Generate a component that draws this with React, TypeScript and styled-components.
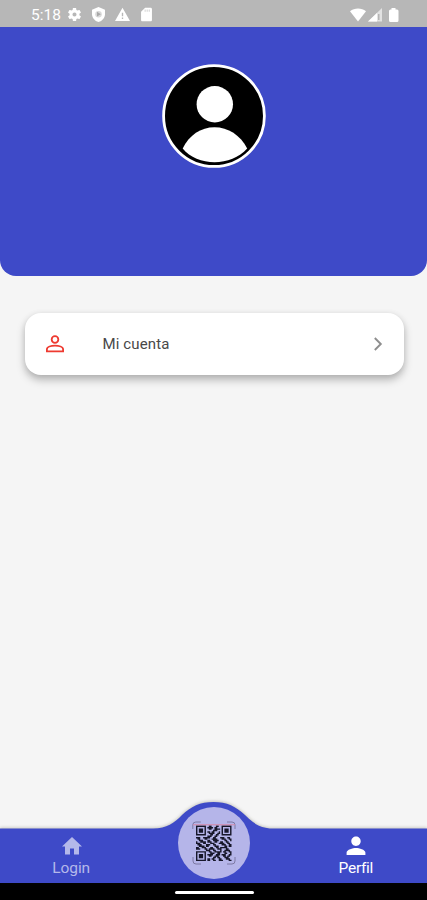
import React from "react";
import styled, { createGlobalStyle } from "styled-components";

const GlobalStyle = createGlobalStyle`
  * { box-sizing: border-box; }
  body { margin: 0; background: #f5f5f5; font-family: Roboto, "Liberation Sans", sans-serif; }
`;

const Screen = styled.div`
  width: 427px;
  height: 900px;
  display: flex;
  flex-direction: column;
  overflow: hidden;
  background: #f5f5f5;
`;

const StatusBar = styled.header`
  height: 27px;
  flex: none;
  display: flex;
  align-items: center;
  justify-content: space-between;
  padding: 2px 25px 0 31px;
  background: #b7b7b7;
  color: #fff;
`;

const StatusGroup = styled.div<{ $gap: number }>`
  display: flex;
  align-items: center;
  gap: ${(p) => p.$gap}px;
`;

const Clock = styled.span`
  font-size: 15.5px;
  line-height: 18px;
  width: 29px;
  margin-right: -2px;
  white-space: nowrap;
`;

const Icon = styled.svg<{ $w: number; $h?: number }>`
  display: block;
  flex: none;
  width: ${(p) => p.$w}px;
  height: ${(p) => p.$h ?? p.$w}px;
  fill: currentColor;
`;

const Banner = styled.section`
  height: 248.5px;
  flex: none;
  display: flex;
  justify-content: center;
  align-items: flex-start;
  padding: 36.5px 0 0 1px;
  border-radius: 0 0 16px 16px;
  background: #3e4ac8;
`;

const Content = styled.main`
  flex: 1;
  padding: 37.5px 23.5px 0 24.5px;
`;

const Card = styled.button`
  width: 100%;
  height: 62px;
  display: flex;
  align-items: center;
  padding: 0 18px 0 20px;
  border: 0;
  border-radius: 16px;
  background: #fff;
  box-shadow: 0 5px 8px rgba(0, 0, 0, 0.25), 0 1px 6px rgba(0, 0, 0, 0.08);
  color: #484848;
  font: 400 15px/20px Roboto, "Liberation Sans", sans-serif;
`;

const CardLabel = styled.span`
  flex: 1;
  padding-left: 38px;
  text-align: left;
  letter-spacing: 0.12px;
`;

const Red = styled.span`
  color: #ee3a30;
`;

const Grey = styled.span`
  color: #8e8e8e;
`;

const NavBar = styled.nav`
  position: relative;
  height: 54px;
  flex: none;
  display: grid;
  grid-template-columns: 1fr 1fr 1fr;
`;

const NavShape = styled.svg`
  position: absolute;
  left: 0;
  bottom: 0;
  width: 427px;
  height: 84px;
  overflow: visible;
  fill: #3e4ac8;
  filter: drop-shadow(0 -1px 1.5px rgba(60, 60, 40, 0.25));
`;

const NavItem = styled.a<{ $active?: boolean }>`
  position: relative;
  display: flex;
  flex-direction: column;
  align-items: center;
  padding-top: 5px;
  color: ${(p) => (p.$active ? "#fff" : "#b4b8ea")};
  font-size: 15.5px;
  line-height: 18px;
`;

const NavLabel = styled.span<{ $spacing: number }>`
  margin-top: 1px;
  letter-spacing: ${(p) => p.$spacing}px;
`;

const ScanButton = styled.button`
  position: relative;
  justify-self: center;
  width: 72px;
  height: 72px;
  margin: -22.5px -1px 0 0;
  padding: 0;
  border: 0;
  border-radius: 50%;
  display: flex;
  align-items: center;
  justify-content: center;
  background: #b5b5e9;
`;

const SystemBar = styled.footer`
  height: 17px;
  flex: none;
  display: flex;
  justify-content: center;
  padding: 8px 0 0 1px;
  background: #000;
`;

const HomeHandle = styled.div`
  width: 79px;
  height: 3px;
  border-radius: 2px;
  background: #fff;
`;

const QR_ROWS = [
  "1111111001100011001111111",
  "1000001011110110001000001",
  "1011101001100111101011101",
  "1011101000001110001011101",
  "1011101011011000101011101",
  "1000001001111001101000001",
  "1111111000110011001111111",
  "0000000011100110000000000",
  "1110011111001100011100110",
  "0110001100011110001110011",
  "0011100011001111000011001",
  "1001111011100110011001100",
  "1110011000111000111100110",
  "0111000111001100001110011",
  "0011110110000111000011011",
  "1100111000110011011111000",
  "1110001101111001110001100",
  "0000000111001100010011110",
  "1111111001100111110110011",
  "1000001000111001100011001",
  "1011101011110011101110011",
  "1011101001100111000110110",
  "1011101000001101100011100",
  "1000001011011000110001110",
  "1111111011001100111000011",
];

const QR_PATH = QR_ROWS.map((row, y) =>
  [...row].map((cell, x) => (cell === "1" ? `M${x} ${y}h1v1h-1z` : "")).join("")
).join("");

function Avatar() {
  return (
    <Icon $w={104} viewBox="0 0 104 104" aria-label="Avatar">
      <circle cx="52" cy="52" r="50.4" fill="#000" stroke="#fff" strokeWidth="2.8" />
      <circle cx="52.8" cy="40.2" r="18.2" fill="#fff" />
      <path d="M20.7 84.5C27 71 39 63.2 52.5 63.2S78.5 71 85.2 84.5C77 93.5 65 98.2 52.5 98.2S28 93.5 20.7 84.5Z" fill="#fff" />
    </Icon>
  );
}

function QrIcon() {
  return (
    <Icon $w={44} viewBox="0 0 44 44">
      <g transform="translate(4 4.6) scale(1.42)">
        <path d={QR_PATH} fill="#17172a" shapeRendering="geometricPrecision" />
      </g>
      <path
        d="M.8 8V4a3 3 0 0 1 3-3h5M35 1h5a3 3 0 0 1 3 3v4M43 36v4a3 3 0 0 1-3 3h-5M9 43H4a3 3 0 0 1-3-3v-4"
        fill="none"
        stroke="#7d79a3"
        strokeWidth="1"
      />
      <path d="M1 3.8h42" stroke="#d78aa8" strokeWidth="1.1" />
    </Icon>
  );
}

export default function App() {
  return (
    <>
      <GlobalStyle />
      <Screen>
        <StatusBar>
          <StatusGroup $gap={9}>
            <Clock>5:18</Clock>
            <Icon $w={15} viewBox="1 1 22 22">
              <path d="M19.14 12.94c.04-.3.06-.61.06-.94 0-.32-.02-.64-.07-.94l2.03-1.58a.49.49 0 0 0 .12-.61l-1.92-3.32a.488.488 0 0 0-.59-.22l-2.39.96c-.5-.38-1.03-.7-1.62-.94l-.36-2.54a.484.484 0 0 0-.48-.41h-3.84c-.24 0-.43.17-.47.41l-.36 2.54c-.59.24-1.13.57-1.62.94l-2.39-.96a.48.48 0 0 0-.59.22L2.74 8.87c-.12.21-.08.47.12.61l2.03 1.58c-.05.3-.09.63-.09.94s.02.64.07.94l-2.03 1.58a.49.49 0 0 0-.12.61l1.92 3.32c.12.22.37.29.59.22l2.39-.96c.5.38 1.03.7 1.62.94l.36 2.54c.05.24.24.41.48.41h3.84c.24 0 .44-.17.47-.41l.36-2.54c.59-.24 1.13-.56 1.62-.94l2.39.96c.22.08.47 0 .59-.22l1.92-3.32a.48.48 0 0 0-.12-.61zM12 15a3 3 0 1 1 0-6 3 3 0 0 1 0 6z" />
            </Icon>
            <Icon $w={15} viewBox="1 1 22 22">
              <path d="M12 1 2.5 5v6.500c0 5.200 4 10 9.500 11.500 5.500-1.500 9.500-6.300 9.500-11.500V5z" />
              <circle cx="12" cy="11.500" r="4.800" fill="#d9d9d9" />
              <path d="M9.800 8v7l5.700-3.500z" fill="#a8a8a8" />
            </Icon>
            <Icon $w={15} viewBox="1 1 22 22">
              <path fillRule="evenodd" d="M1 21.500h22L12 2zm12-3h-2v-2h2zm0-4h-2v-5h2z" />
            </Icon>
            <Icon $w={15} viewBox="1 1 22 22">
              <path d="M18 2h-8L4.020 8 4 20c0 1.100.9 2 2 2h12c1.100 0 2-.9 2-2V4c0-1.100-.9-2-2-2z" />
              <path d="M10 4.500V8M13 4.500V8M16 4.500V8" stroke="#d2d2d2" strokeWidth="1.500" />
            </Icon>
          </StatusGroup>
          <StatusGroup $gap={2}>
            <Icon $w={16} $h={14} viewBox="0 0 16 14">
              <path d="M0 3.300C4.500-.5 11.500-.5 16 3.300L8 13.500z" />
            </Icon>
            <Icon $w={14} $h={14} viewBox="0 0 14 14">
              <path d="M0 13.500 14 0v13.500z" opacity=".6" />
              <path d="M0 13.500 9 5v8.500z" />
              <path d="M10.800 6v6" stroke="#aaa" strokeWidth="1.200" />
            </Icon>
            <Icon $w={18} $h={14} viewBox="0 0 18 14">
              <path d="M7.500 0h4v1.500H13a1.500 1.500 0 0 1 1.500 1.500v9.500A1.500 1.500 0 0 1 13 14H6.500A1.500 1.500 0 0 1 5 12.500V3a1.500 1.500 0 0 1 1.500-1.500h1z" />
            </Icon>
          </StatusGroup>
        </StatusBar>

        <Banner>
          <Avatar />
        </Banner>

        <Content>
          <Card>
            <Red>
              <Icon $w={20} $h={20} viewBox="0 0 21 20">
                <g fill="none" stroke="currentColor" strokeWidth="1.900">
                  <circle cx="10.500" cy="5.300" r="3.500" />
                  <path d="M2 17.700v-2.200c0-2.500 4.600-3.700 8.500-3.700s8.500 1.200 8.500 3.700v2.200z" />
                </g>
              </Icon>
            </Red>
            <CardLabel>Mi cuenta</CardLabel>
            <Grey>
              <Icon $w={16} viewBox="0 0 16 16">
                <path d="m4.800 2 6 6-6 6" fill="none" stroke="currentColor" strokeWidth="1.900" />
              </Icon>
            </Grey>
          </Card>
        </Content>

        <NavBar>
          <NavShape viewBox="0 0 427 84">
            <path d="M0 84V29.500H153C167 29.500 174 24 182 16C191 7.500 200 3 213.500 3S236 7.500 245 16C253 24 260 29.500 274 29.500H427V84Z" />
          </NavShape>
          <NavItem>
            <Icon $w={25} $h={24} viewBox="-0.500 0 24 24">
              <path d="M10 20.500v-6h4v6h5v-8h3L12 3 2 12.500h3v8z" />
            </Icon>
            <NavLabel $spacing={-0.1}>Login</NavLabel>
          </NavItem>
          <ScanButton aria-label="QR">
            <QrIcon />
          </ScanButton>
          <NavItem $active>
            <Icon $w={24} viewBox="0 0 24 24">
              <path d="M12 12c2.600 0 4.700-2.100 4.700-4.700S14.600 2.600 12 2.600 7.300 4.700 7.300 7.300 9.400 12 12 12zm0 1.900c-3.100 0-9.400 1.600-9.400 4.700V21h18.800v-2.400c0-3.100-6.300-4.700-9.400-4.700z" />
            </Icon>
            <NavLabel $spacing={-0.3}>Perfil</NavLabel>
          </NavItem>
        </NavBar>
        <SystemBar>
          <HomeHandle />
        </SystemBar>
      </Screen>
    </>
  );
}
